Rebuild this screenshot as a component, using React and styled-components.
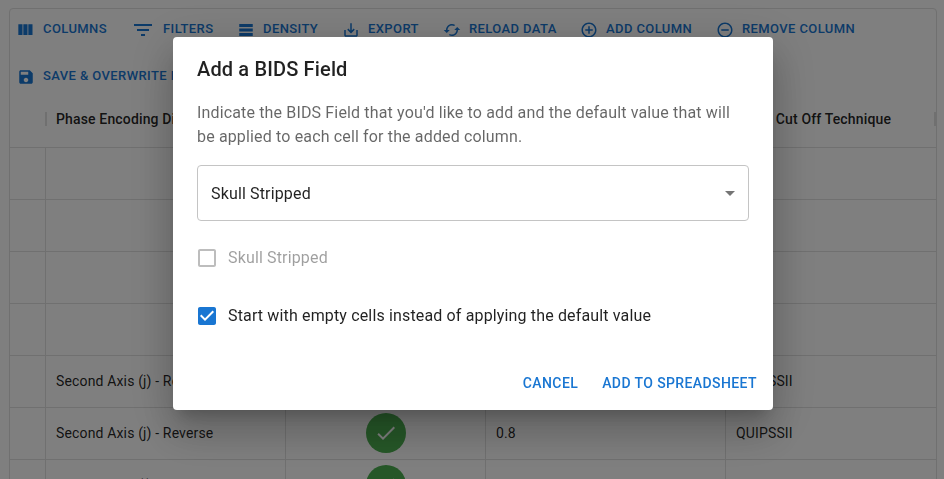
import React from "react";
import styled, { createGlobalStyle } from "styled-components";

const Global = createGlobalStyle`
  *, *::before, *::after { box-sizing: border-box; }
  body { margin: 0; overflow: hidden; background: #fff; font-family: Roboto, "Liberation Sans", sans-serif; -webkit-font-smoothing: antialiased; color: rgba(0,0,0,.87); }
`;

const Page = styled.main`
  height: 479px;
  overflow: hidden;
  padding: 8px 7px 0 9px;
`;
const Grid = styled.section`
  height: 600px;
  border: 1px solid #e0e0e0;
  border-radius: 4px;
  font-size: 14px;
`;
const Toolbar = styled.div`
  display: flex;
  flex-direction: column;
  gap: 16px;
  padding: 5px 4px 0;
`;
const ToolbarRow = styled.div`
  display: flex;
  height: 31px;
  align-items: center;
`;
const ToolButton = styled.button`
  display: flex;
  align-items: center;
  flex: none;
  height: 31px;
  width: ${(p) => p.$width}px;
  padding: 0 0 0 ${(p) => p.$pad}px;
  gap: 8px;
  border: 0;
  background: none;
  color: #1976d2;
  font: 500 13px/22.75px Roboto, sans-serif;
  letter-spacing: 0.4px;
  text-transform: uppercase;
  white-space: nowrap;
`;
const Icon = styled.svg`
  width: ${(p) => p.$size || 18}px;
  height: ${(p) => p.$size || 18}px;
  flex: none;
  fill: currentColor;
`;
const Row = styled.div`
  display: grid;
  grid-template-columns: 36px 240px 200px 240px 1fr;
  height: 52px;
  border-bottom: 1px solid #e0e0e0;
`;
const HeaderRow = styled(Row)`
  height: 56px;
  font-weight: 500;
  letter-spacing: 0.15px;
`;
const Cell = styled.div`
  display: flex;
  align-items: center;
  justify-content: ${(p) => (p.$center ? "center" : "flex-start")};
  padding: 0 10px 1px;
  letter-spacing: 0.15px;
  border-right: 1px solid #e0e0e0;
  white-space: nowrap;
  overflow: hidden;
  &:last-child { border-right: 0; }
`;
const HeaderCell = styled.div`
  display: flex;
  align-items: center;
  padding: 0 0 2px 10px;
  margin-right: -1px;
  white-space: nowrap;
  &:last-child { margin-right: 0; }
  &::after { content: ""; margin-left: auto; width: 2px; height: 14px; background: #e0e0e0; }
`;
const Badge = styled.span`
  display: grid;
  place-items: center;
  width: 40px;
  height: 40px;
  border-radius: 50%;
  background: #4caf50;
  color: #fff;
`;
const Backdrop = styled.div`
  position: fixed;
  inset: 0;
  display: flex;
  align-items: flex-start;
  justify-content: center;
  padding: 37px 0 0 2px;
  background: rgba(0,0,0,.5);
`;
const Dialog = styled.div`
  width: 600px;
  height: 373px;
  display: flex;
  flex-direction: column;
  border-radius: 4px;
  background: #fff;
  box-shadow: 0 11px 15px -7px rgba(0,0,0,.2), 0 24px 38px 3px rgba(0,0,0,.14), 0 9px 46px 8px rgba(0,0,0,.12);
`;
const Title = styled.h2`
  margin: 0;
  padding: 16px 24px;
  font-size: 20px;
  font-weight: 500;
  line-height: 32px;
  letter-spacing: 0.15px;
`;
const Body = styled.div`
  padding: 0 24px;
  flex: 1;
`;
const Description = styled.p`
  margin: 0 0 16px;
  color: rgba(0,0,0,.6);
  font-size: 16px;
  line-height: 24px;
  letter-spacing: 0.15px;
`;
const Select = styled.div`
  display: flex;
  align-items: center;
  justify-content: space-between;
  height: 56px;
  padding: 0 6px 0 13px;
  border: 1px solid #c4c4c4;
  border-radius: 4px;
  font-size: 16px;
  letter-spacing: 0.15px;
  & svg { color: rgba(0,0,0,.54); }
`;
const CheckRow = styled.div`
  display: flex;
  align-items: center;
  gap: 9px;
  height: 42px;
  margin: 16px 0 0 -2px;
  color: ${(p) => (p.$disabled ? "rgba(0,0,0,.38)" : "rgba(0,0,0,.87)")};
  & svg { color: ${(p) => (p.$disabled ? "rgba(0,0,0,.26)" : "#1976d2")}; }
`;
const CheckLabel = styled.span`
  padding-bottom: 1px;
  font-size: 16px;
  line-height: 24px;
  letter-spacing: 0.15px;
`;
const Actions = styled.div`
  display: flex;
  justify-content: flex-end;
  gap: 8px;
  padding: 8px 8px 9px;
`;
const ActionButton = styled.button`
  border: 0;
  background: none;
  color: #1976d2;
  padding: 6px 8px;
  font: 500 14px/24.5px Roboto, sans-serif;
  letter-spacing: 0.4px;
  text-transform: uppercase;
`;

const PATHS = {
  columns: "M4 5h5v13H4zM10 5h5v13h-5zM16 5h5v13h-5z",
  filters: "M10 18h4v-2h-4v2zM3 6v2h18V6H3zm3 7h12v-2H6v2z",
  density: "M21 8H3V4h18v4zm0 2H3v4h18v-4zm0 6H3v4h18v-4z",
  export: "M19 12v7H5v-7H3v7c0 1.1.9 2 2 2h14c1.1 0 2-.9 2-2v-7h-2zm-6 .67l2.59-2.58L17 11.5l-5 5-5-5 1.41-1.41L11 12.67V3h2z",
  reload: "m19 8-4 4h3c0 3.31-2.69 6-6 6-1.01 0-1.97-.25-2.8-.7l-1.46 1.46C8.97 19.54 10.43 20 12 20c4.42 0 8-3.58 8-8h3l-4-4zM6 12c0-3.31 2.69-6 6-6 1.01 0 1.97.25 2.8.7l1.46-1.46C15.03 4.46 13.57 4 12 4c-4.42 0-8 3.58-8 8H1l4 4 4-4H6z",
  add: "M13 7h-2v4H7v2h4v4h2v-4h4v-2h-4V7zm-1-5C6.48 2 2 6.48 2 12s4.48 10 10 10 10-4.48 10-10S17.52 2 12 2zm0 18c-4.41 0-8-3.59-8-8s3.59-8 8-8 8 3.59 8 8-3.59 8-8 8z",
  remove: "M7 11v2h10v-2H7zm5-9C6.48 2 2 6.48 2 12s4.48 10 10 10 10-4.48 10-10S17.52 2 12 2zm0 18c-4.41 0-8-3.59-8-8s3.59-8 8-8 8 3.59 8 8-3.59 8-8 8z",
  save: "M17 3H5c-1.11 0-2 .9-2 2v14c0 1.1.89 2 2 2h14c1.1 0 2-.9 2-2V7l-4-4zm-5 16c-1.66 0-3-1.34-3-3s1.34-3 3-3 3 1.34 3 3-1.34 3-3 3zm3-10H5V5h10v4z",
  check: "M9 16.17 4.83 12l-1.42 1.41L9 19 21 7l-1.41-1.41z",
  arrow: "m7 10 5 5 5-5z",
  box: "M19 5v14H5V5h14m0-2H5c-1.1 0-2 .9-2 2v14c0 1.1.9 2 2 2h14c1.1 0 2-.9 2-2V5c0-1.1-.9-2-2-2z",
  checked: "M19 3H5c-1.11 0-2 .9-2 2v14c0 1.1.89 2 2 2h14c1.11 0 2-.9 2-2V5c0-1.1-.89-2-2-2zm-9 14-5-5 1.41-1.41L10 14.17l7.59-7.59L19 8l-9 9z",
};

const Glyph = ({ name, size }) => (
  <Icon viewBox="0 0 24 24" $size={size} aria-hidden="true"><path d={PATHS[name]} /></Icon>
);

const TOOLS = [
  { icon: "columns", label: "Columns", size: 20, width: 116 },
  { icon: "filters", label: "Filters", size: 24, width: 106 },
  { icon: "density", label: "Density", size: 18, width: 105 },
  { icon: "export", label: "Export", size: 18, width: 101 },
  { icon: "reload", label: "Reload data", size: 18, width: 137 },
  { icon: "add", label: "Add column", size: 18, width: 136 },
  { icon: "remove", label: "Remove column", size: 18, width: 150 },
];

const ROWS = [
  null, null, null, null,
  ["Second Axis (j) - Reverse", "0.8", "QUIPSSII"],
  ["Second Axis (j) - Reverse", "0.8", "QUIPSSII"],
  ["Second Axis (j) - Reverse", "", ""],
];

export default function App() {
  return (
    <>
      <Global />
      <Page>
        <Grid>
          <Toolbar>
            <ToolbarRow>
              {TOOLS.map((t) => (
                <ToolButton key={t.label} $width={t.width} $pad={1}>
                  <Glyph name={t.icon} size={t.size} />{t.label}
                </ToolButton>
              ))}
            </ToolbarRow>
            <ToolbarRow>
              <ToolButton $width={220} $pad={3}><Glyph name="save" />Save &amp; overwrite bids data</ToolButton>
            </ToolbarRow>
          </Toolbar>
          <HeaderRow>
            <HeaderCell />
            <HeaderCell>Phase Encoding Direction</HeaderCell>
            <HeaderCell />
            <HeaderCell />
            <HeaderCell>Bolus Cut Off Technique</HeaderCell>
          </HeaderRow>
          {ROWS.map((r, i) => (
            <Row key={i}>
              <Cell />
              <Cell>{r && r[0]}</Cell>
              <Cell $center>{r && <Badge><Glyph name="check" size={24} /></Badge>}</Cell>
              <Cell>{r && r[1]}</Cell>
              <Cell>{r && r[2]}</Cell>
            </Row>
          ))}
        </Grid>
      </Page>
      <Backdrop>
        <Dialog role="dialog">
          <Title>Add a BIDS Field</Title>
          <Body>
            <Description>
              Indicate the BIDS Field that you'd like to add and the default value that will be applied to each cell for the added column.
            </Description>
            <Select>Skull Stripped<Glyph name="arrow" size={24} /></Select>
            <CheckRow $disabled><Glyph name="box" size={24} /><CheckLabel>Skull Stripped</CheckLabel></CheckRow>
            <CheckRow><Glyph name="checked" size={24} /><CheckLabel>Start with empty cells instead of applying the default value</CheckLabel></CheckRow>
          </Body>
          <Actions>
            <ActionButton>Cancel</ActionButton>
            <ActionButton>Add to spreadsheet</ActionButton>
          </Actions>
        </Dialog>
      </Backdrop>
    </>
  );
}
